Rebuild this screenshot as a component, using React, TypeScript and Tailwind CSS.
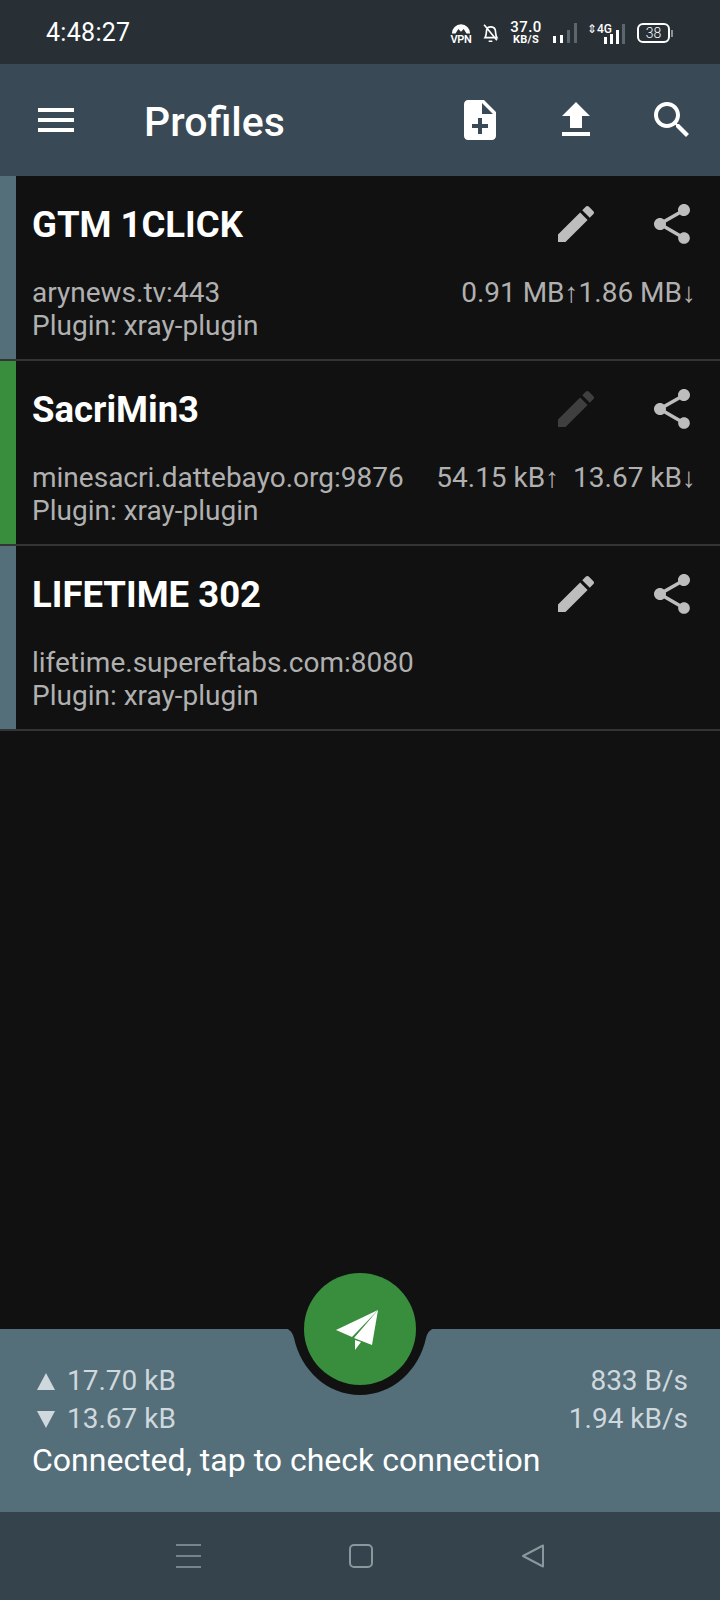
import React from "react";

const P = {
  menu: "M3 18h18v-2H3v2zm0-5h18v-2H3v2zm0-7v2h18V6H3z",
  note: "M14 2H6c-1.1 0-1.99.9-1.99 2L4 20c0 1.1.89 2 1.99 2H18c1.1 0 2-.9 2-2V8l-6-6zm2 14h-3v3h-2v-3H8v-2h3v-3h2v3h3v2zm-3-7V3.5L18.5 9H13z",
  upload: "M9 16h6v-6h4l-7-7-7 7h4zm-4 2h14v2H5z",
  search: "M15.5 14h-.79l-.28-.27C15.41 12.59 16 11.11 16 9.5 16 5.91 13.09 3 9.5 3S3 5.91 3 9.5 5.91 16 9.5 16c1.61 0 3.09-.59 4.23-1.57l.27.28v.79l5 4.99L20.49 19l-4.99-5zm-6 0C7.01 14 5 11.99 5 9.5S7.01 5 9.5 5 14 7.01 14 9.5 11.99 14 9.5 14z",
  edit: "M3 17.25V21h3.75L17.81 9.94l-3.75-3.75L3 17.25zM20.71 7.04c.39-.39.39-1.02 0-1.41l-2.34-2.34c-.39-.39-1.02-.39-1.41 0l-1.83 1.83 3.75 3.75 1.83-1.83z",
  share: "M18 16.08c-.76 0-1.44.3-1.96.77L8.91 12.7c.05-.23.09-.46.09-.7s-.04-.47-.09-.7l7.05-4.11c.54.5 1.25.81 2.04.81 1.66 0 3-1.34 3-3s-1.34-3-3-3-3 1.34-3 3c0 .24.04.47.09.7L8.04 9.81C7.5 9.31 6.79 9 6 9c-1.66 0-3 1.34-3 3s1.34 3 3 3c.79 0 1.5-.31 2.04-.81l7.12 4.16c-.05.21-.08.43-.08.65 0 1.61 1.31 2.92 2.92 2.92 1.61 0 2.92-1.31 2.92-2.92s-1.31-2.92-2.92-2.92z",
};

function Icon({ d, className }: { d: string; className: string }) {
  return (
    <svg viewBox="0 0 24 24" className={className} fill="currentColor">
      <path d={d} />
    </svg>
  );
}

function Bars({ heights, on, gap }: { heights: number[]; on: number; gap: string }) {
  return (
    <div className={"flex items-end h-[20px] " + gap}>
      {heights.map((h, i) => (
        <div
          key={i}
          className={i < on ? "w-[3px] bg-white" : "w-[3px] bg-[#5c666c]"}
          style={{ height: h }}
        />
      ))}
    </div>
  );
}

function StatusBar() {
  return (
    <div className="h-16 shrink-0 bg-[#283036] flex items-center justify-between pl-[46px] pr-[47px] pt-[2px] text-white">
      <span className="text-[25px] tracking-[0.3px] font-['Roboto',sans-serif]">4:48:27</span>
      <div className="flex items-center">
        <div className="w-[22px] flex flex-col items-center">
          <svg viewBox="0 0 22 12" className="w-[20px] h-[12px]" fill="#fff">
            <path d="M1 12a10 10 0 0 1 20 0h-4l-3-5-3 3-3-3-3 5z" />
          </svg>
          <span className="text-[11px] leading-[11px] font-semibold font-['Roboto',sans-serif] tracking-[-0.3px]">VPN</span>
        </div>
        <svg viewBox="0 0 18 24" className="w-[17px] h-[22px] ml-[10px]" fill="none" stroke="#fff" strokeWidth="1.8">
          <path d="M3 17c2-3 1-6 2-9 1-3 7-4 9 0 1 3 0 6 2 9zM2 3l14 17M7 21h4" />
        </svg>
        <div className="ml-[12px] w-[30px] flex flex-col items-center font-['Roboto',sans-serif]">
          <span className="text-[15px] leading-[13px] font-medium tracking-[0.4px]">37.0</span>
          <span className="text-[11px] leading-[11px] font-bold tracking-[0.3px]">KB/S</span>
        </div>
        <div className="ml-[12px]">
          <Bars heights={[7, 8, 13, 20]} on={2} gap="gap-[4px]" />
        </div>
        <div className="ml-[10px] relative w-[38px] h-[22px] flex items-end justify-end">
          <span className="absolute left-0 top-0 text-[12px] leading-[14px] font-medium font-['Roboto',sans-serif]">⇕4G</span>
          <Bars heights={[7, 10, 14, 20]} on={3} gap="gap-[3px]" />
        </div>
        <div className="ml-[12px] w-[33px] h-[20px] rounded-[6px] border-2 border-white flex items-center justify-center text-[14px] font-light font-['Roboto',sans-serif]">
          38
        </div>
        <div className="w-[2px] h-[7px] bg-[#8b9398] ml-[1px]" />
      </div>
    </div>
  );
}

function Toolbar() {
  return (
    <div className="h-28 shrink-0 bg-[#394955] flex items-center text-white">
      <div className="pl-8 w-[144px]">
        <Icon d={P.menu} className="w-12 h-12" />
      </div>
      <span className="flex-1 pt-[6px] text-[41px] font-medium font-['Roboto',sans-serif]">Profiles</span>
      <div className="w-24 flex justify-center"><Icon d={P.note} className="w-12 h-12" /></div>
      <div className="w-24 flex justify-center"><Icon d={P.upload} className="w-12 h-12" /></div>
      <div className="w-24 flex justify-center"><Icon d={P.search} className="w-12 h-12" /></div>
    </div>
  );
}

function Card({
  title, host, traffic, active,
}: { title: string; host: string; traffic?: string; active?: boolean }) {
  return (
    <div className="h-[185px] flex border-b-2 border-[#333435]">
      <div className={active ? "w-4 bg-[#388e3c]" : "w-4 bg-[#546e7a]"} />
      <div className="flex-1 flex flex-col">
        <div className="h-[96px] flex items-center">
          <span className="flex-1 pl-4 pt-[3px] text-[36.5px] font-bold text-white font-['Roboto',sans-serif]">{title}</span>
          <div className="w-24 flex justify-center">
            <Icon d={P.edit} className={active ? "w-12 h-12 text-[#3f3f3f]" : "w-12 h-12 text-[#bdbdbd]"} />
          </div>
          <div className="w-24 flex justify-center">
            <Icon d={P.share} className="w-12 h-12 text-[#bdbdbd]" />
          </div>
        </div>
        <div className="pl-4 pr-[24px] pt-[4px] text-[28px] leading-[33px] text-[#b0b0b0] font-['Roboto',sans-serif]">
          <div className="flex justify-between">
            <span>{host}</span>
            {traffic && <span className="whitespace-pre">{traffic}</span>}
          </div>
          <div>Plugin: xray-plugin</div>
        </div>
      </div>
    </div>
  );
}

function Fab() {
  return (
    <>
      <svg viewBox="0 0 180 72" className="absolute left-[270px] -top-px w-[180px] h-[72px]" fill="#111111">
        <path d="M11 0h158c-8 0-11 3-13 10-7 32-33 57-66 57S31 42 24 10C22 3 19 0 11 0z" />
      </svg>
      <div className="absolute left-[304px] -top-14 w-28 h-28 rounded-full bg-[#388e3c]">
        <svg viewBox="0 0 112 112" className="w-28 h-28">
          <path d="M74 37 32 57l16 7 26-27z" fill="#fff" />
          <path d="M74 37 50 65l18 7z" fill="#fff" />
          <path d="M51 67l6 2-6 8z" fill="#fff" />
        </svg>
      </div>
    </>
  );
}

function Triangle({ down }: { down?: boolean }) {
  return (
    <svg viewBox="0 0 18 17" className="w-[18px] h-[17px] ml-[5px]" fill="#cfd8dc">
      <path d={down ? "M0 0h18L9 17z" : "M0 17h18L9 0z"} />
    </svg>
  );
}

function BottomBar() {
  return (
    <div className="relative h-[183px] shrink-0 bg-[#546e7a] pt-[33px] pl-[32px] pr-[32px] font-['Roboto',sans-serif]">
      <Fab />
      <div className="flex justify-between text-[28px] leading-[38px] text-[#cfd8dc]">
        <span className="flex items-center gap-[12px]"><Triangle />17.70 kB</span>
        <span>833 B/s</span>
      </div>
      <div className="flex justify-between text-[28px] leading-[38px] text-[#cfd8dc]">
        <span className="flex items-center gap-[12px]"><Triangle down />13.67 kB</span>
        <span>1.94 kB/s</span>
      </div>
      <div className="text-[32px] leading-[44px] text-white">Connected, tap to check connection</div>
    </div>
  );
}

function NavBar() {
  return (
    <div className="h-[88px] shrink-0 bg-[#35444c] flex items-center justify-center gap-[148px] pb-[1px]">
      <div className="w-[25px] h-[24px] flex flex-col justify-between">
        <div className="h-[2px] bg-[#76848b]" />
        <div className="h-[2px] bg-[#76848b]" />
        <div className="h-[2px] bg-[#76848b]" />
      </div>
      <div className="w-[24px] h-[24px] rounded-[5px] border-2 border-[#8a979d]" />
      <svg viewBox="0 0 24 24" className="w-[24px] h-[24px]" fill="none" stroke="#8a979d" strokeWidth="2" strokeLinejoin="round">
        <path d="M22 1.5v21L2 12z" />
      </svg>
    </div>
  );
}

export default function App() {
  return (
    <div className="w-[720px] h-[1600px] flex flex-col bg-[#111111] overflow-hidden">
      <StatusBar />
      <Toolbar />
      <div className="flex-1">
        <Card title="GTM 1CLICK" host="arynews.tv:443" traffic={"0.91 MB↑1.86 MB↓"} />
        <Card title="SacriMin3" host="minesacri.dattebayo.org:9876" traffic={"54.15 kB↑  13.67 kB↓"} active />
        <Card title="LIFETIME 302" host="lifetime.supereftabs.com:8080" />
      </div>
      <BottomBar />
      <NavBar />
    </div>
  );
}
